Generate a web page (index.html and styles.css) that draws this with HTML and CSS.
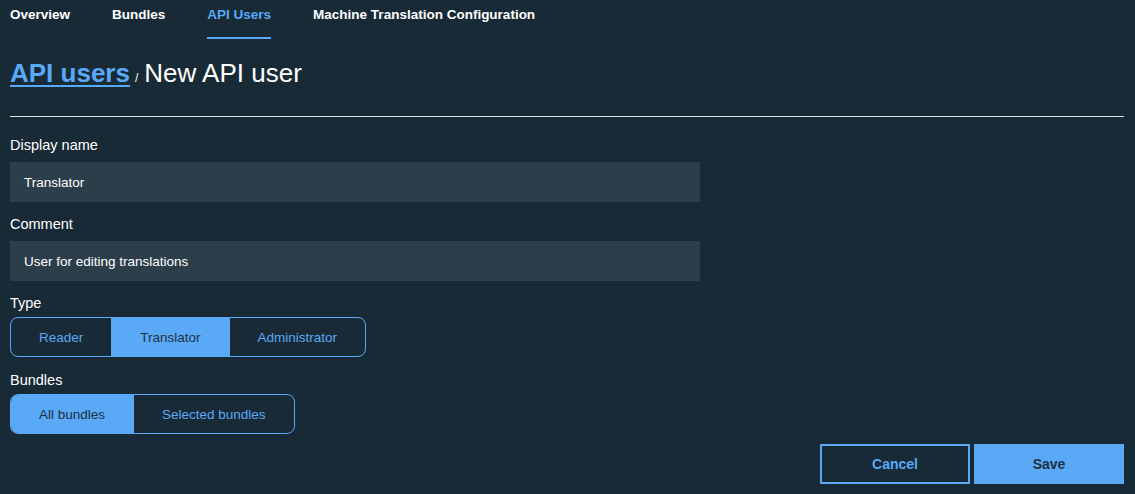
FILE: index.html
```html
<!DOCTYPE html>
<html lang="en">
<head>
<meta charset="utf-8">
<title>New API user</title>
<link rel="stylesheet" href="styles.css">
</head>
<body>
<div class="page">
  <nav class="tabs">
    <a class="tab">Overview</a>
    <a class="tab">Bundles</a>
    <a class="tab active">API Users</a>
    <a class="tab">Machine Translation Configuration</a>
  </nav>
  <h1 class="title"><a class="crumb">API users</a><span class="sep">/</span><span class="current">New API user</span></h1>
  <hr class="rule">
  <form class="form">
    <label class="label label-name">Display name</label>
    <div class="input">Translator</div>
    <label class="label label-comment">Comment</label>
    <div class="input">User for editing translations</div>
    <label class="label label-type">Type</label>
    <div class="segmented seg-type">
      <span class="seg">Reader</span>
      <span class="seg selected">Translator</span>
      <span class="seg">Administrator</span>
    </div>
    <label class="label label-bundles">Bundles</label>
    <div class="segmented seg-bundles">
      <span class="seg selected">All bundles</span>
      <span class="seg">Selected bundles</span>
    </div>
    <div class="actions">
      <button type="button" class="btn btn-secondary">Cancel</button>
      <button type="button" class="btn btn-primary">Save</button>
    </div>
  </form>
</div>
</body>
</html>
```

FILE: styles.css
```css
* { box-sizing: border-box; }
html, body {
  margin: 0;
  padding: 0;
  background: #172a36;
  color: #ffffff;
  font-family: "Liberation Sans", Arial, sans-serif;
}
.page {
  padding: 0 11px 0 10px;
}
.tabs {
  display: flex;
  gap: 42px;
  height: 39px;
}
.tab {
  display: block;
  font-size: 13.5px;
  font-weight: bold;
  line-height: 16px;
  padding-top: 7px;
  color: #ffffff;
  height: 39px;
}
.tab.active {
  color: #5aa9f7;
  border-bottom: 2px solid #5aa9f7;
}
.title {
  margin: 19px 0 0 0;
  font-size: 26px;
  line-height: 30px;
  font-weight: normal;
  display: flex;
  align-items: baseline;
}
.crumb {
  color: #5aa9f7;
  font-weight: bold;
  text-decoration: underline;
  text-decoration-thickness: 2px;
  text-underline-offset: 3px;
}
.sep {
  font-size: 12px;
  margin: 0 6px 0 5px;
  color: #ffffff;
}
.current {
  color: #ffffff;
}
.rule {
  margin: 23px 0 0 0;
  border: 0;
  border-top: 1px solid #dfe3e6;
  height: 0;
}
.form {
  display: flex;
  flex-direction: column;
  align-items: flex-start;
}
.label {
  display: block;
  font-size: 14.5px;
  line-height: 18px;
  color: #ffffff;
}
.label-name { margin-top: 19px; }
.label-comment { margin-top: 13px; }
.label-type { margin-top: 13px; }
.label-bundles { margin-top: 14px; }
.input {
  margin-top: 8px;
  width: 690px;
  height: 40px;
  background: #2d3e4b;
  color: #ffffff;
  font-size: 13.5px;
  padding: 0 14px;
  display: flex;
  align-items: center;
}
.segmented {
  display: flex;
  height: 40px;
  border: 1px solid #5aa9f7;
  border-radius: 8px;
  overflow: hidden;
}
.seg-type { margin-top: 5px; }
.seg-bundles { margin-top: 5px; }
.seg {
  display: flex;
  align-items: center;
  padding: 0 28px;
  font-size: 13.5px;
  color: #5aa9f7;
  border-left: 1px solid #5aa9f7;
}
.seg:first-child {
  border-left: 0;
}
.seg.selected {
  background: #5aa9f7;
  color: #1d3241;
}
.actions {
  margin-top: 10px;
  align-self: stretch;
  display: flex;
  justify-content: flex-end;
  gap: 4px;
}
.btn {
  width: 150px;
  height: 40px;
  font-family: "Liberation Sans", Arial, sans-serif;
  font-size: 14px;
  font-weight: bold;
  border-radius: 0;
  cursor: pointer;
}
.btn-secondary {
  background: transparent;
  border: 2px solid #5aa9f7;
  color: #5aa9f7;
}
.btn-primary {
  background: #5aa9f7;
  border: 0;
  color: #1d3241;
}
```
